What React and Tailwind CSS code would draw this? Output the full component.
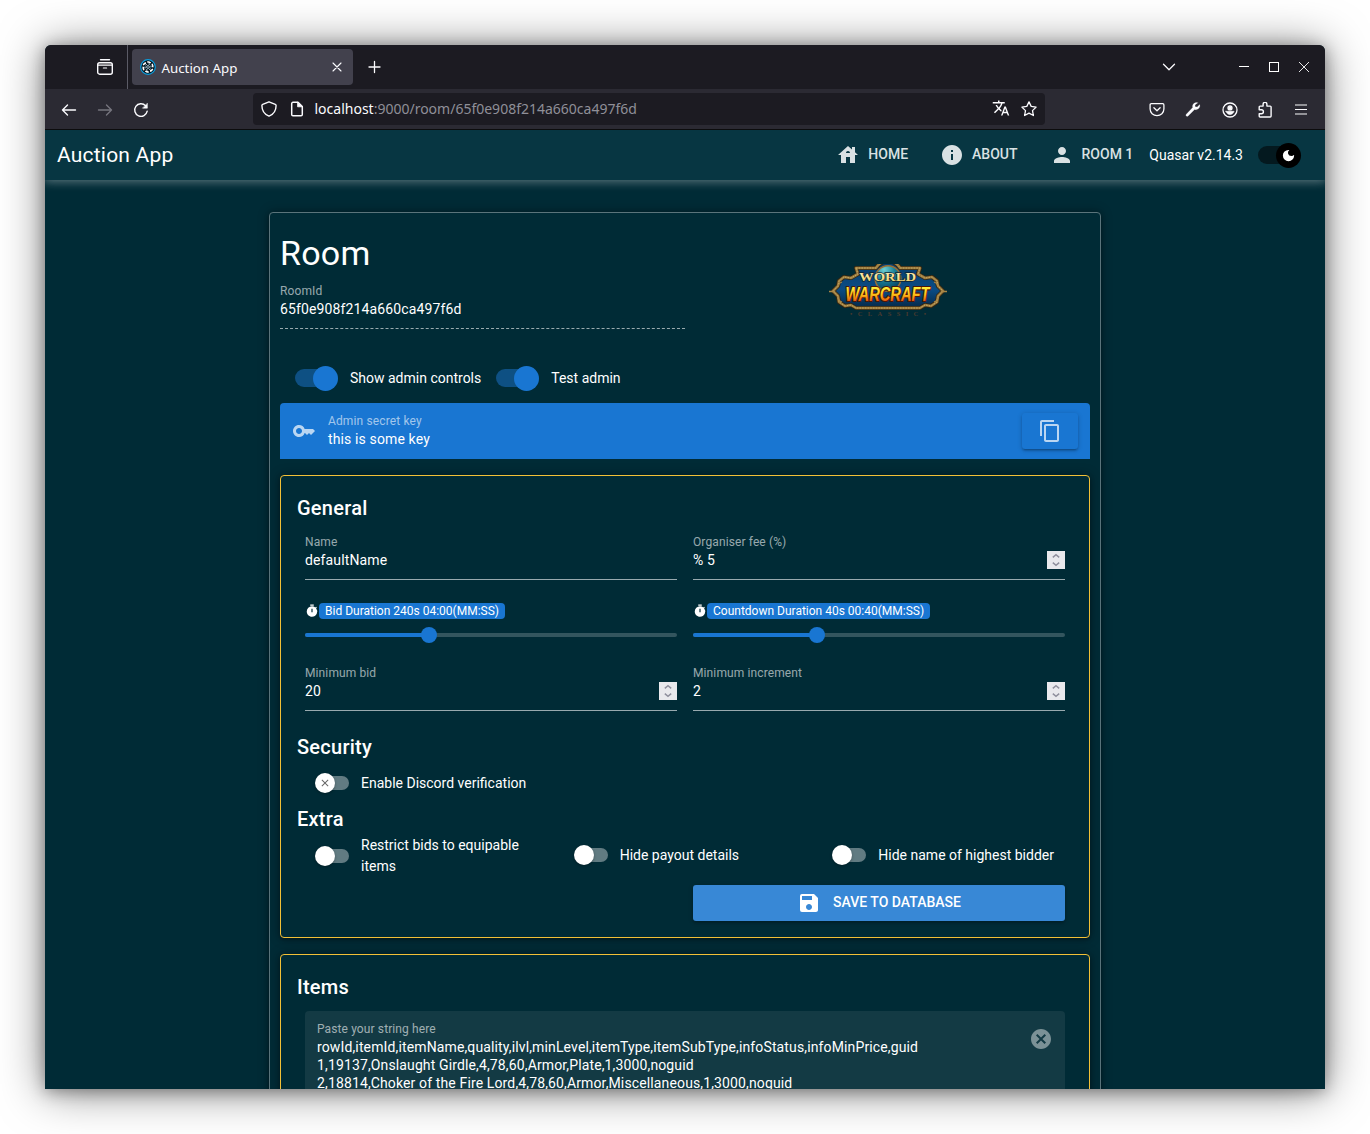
import React from "react";
import {
  MdKey,
  MdContentCopy,
  MdTimer,
  MdSave,
  MdCancel,
  MdInfo,
  MdPerson,
  MdHouse,
  MdDarkMode,
  MdClose,
  MdTranslate,
} from "react-icons/md";

const cardShadow =
  "shadow-[0_1px_5px_rgba(0,0,0,0.2),0_2px_2px_rgba(0,0,0,0.14),0_0_12px_rgba(0,0,0,0.3)]";

function Stroke({ size = 16, className = "", children, width = 1.4 }) {
  return (
    <svg
      width={size}
      height={size}
      viewBox={`0 0 ${size} ${size}`}
      fill="none"
      stroke="currentColor"
      strokeWidth={width}
      strokeLinecap="round"
      strokeLinejoin="round"
      className={`shrink-0 ${className}`}
    >
      {children}
    </svg>
  );
}

function Favicon() {
  return (
    <svg width="16" height="16" viewBox="0 0 16 16" className="shrink-0">
      <circle cx="8" cy="8" r="7.3" fill="#06141c" stroke="#0a9fe0" strokeWidth="1.2" />
      {[0, 60, 120, 180, 240, 300].map((a) => (
        <g key={a} transform={`rotate(${a} 8 8)`}>
          <path d="M7.200 2.300c1.500-.2 2.900.3 4 1.300L9.800 4.700C9 4 8.200 3.600 7.100 3.500z" fill="#fff" />
          <path d="M8.200 4.800l1.700.9" stroke="#b9e8fb" strokeWidth=".7" />
        </g>
      ))}
      <circle cx="8" cy="8" r="1.4" fill="#0c2a3a" stroke="#dff4fd" strokeWidth=".7" />
    </svg>
  );
}

function TabBar() {
  return (
    <div className="flex h-11 shrink-0 items-center bg-[#1c1b22] text-[#fbfbfe]">
      <div className="flex h-full w-[83px] items-center justify-end border-r border-[#5b5b66] pr-[14px]">
        <Stroke size={16} width={1.4}>
          <path d="M3.500.8h9" />
          <rect x=".7" y="3.700" width="14.600" height="11.500" rx="2" />
          <path d="M.9 6.200h14.200M6.400 9h3.200" strokeWidth="1.200" />
        </Stroke>
      </div>
      <div className="ml-1 flex h-9 w-[221px] items-center rounded bg-[#42414d] pr-[11px] pl-2">
        <Favicon />
        <span className="relative top-[1.500px] ml-[5.500px] flex-1 font-['Noto_Sans'] text-[13.3px] leading-none">
          Auction App
        </span>
        <Stroke size={10} width={1.1}>
          <path d="M1 1l8 8M9 1L1 9" />
        </Stroke>
      </div>
      <Stroke size={14} width={1.3} className="ml-[15px]">
        <path d="M6.500 1.500v11M1 7h11" />
      </Stroke>
      <div className="ml-auto flex items-center pr-4">
        <Stroke size={14} width={1.3} className="mr-[63px]">
          <path d="M1.500 4.300L7 9.700l5.500-5.400" />
        </Stroke>
        <svg width="10" height="12" className="mr-5">
          <path d="M0 5.500h10" stroke="#fff" />
        </svg>
        <svg width="10" height="10" className="mr-5">
          <rect x=".5" y=".5" width="9" height="9" fill="none" stroke="#fff" />
        </svg>
        <svg width="10" height="10">
          <path d="M0 0l10 10M10 0L0 10" stroke="#fff" strokeWidth=".9" />
        </svg>
      </div>
    </div>
  );
}

function NavBar() {
  return (
    <div className="relative z-10 flex h-[41px] shrink-0 items-center border-b border-[#0c0c0d] bg-[#2b2a33] pt-px text-[#fbfbfe]">
      <Stroke size={16} width={1.4} className="ml-4">
        <path d="M14.500 8H1.500M6.500 3L1.500 8l5 5" />
      </Stroke>
      <Stroke size={16} width={1.4} className="ml-5 text-[#76757e]">
        <path d="M1.500 8h13M9.500 3l5 5-5 5" />
      </Stroke>
      <Stroke size={16} width={1.4} className="ml-5">
        <path d="M14.200 9.200A6.300 6.300 0 1 1 12.600 3.700" />
        <path d="M14.400 1.500v4.700H9.700z" fill="currentColor" strokeWidth=".5" />
      </Stroke>
      <div className="relative -top-px ml-[104px] flex h-8 w-[792px] items-center rounded bg-[#1c1b22] pr-2 pl-2">
        <Stroke size={16} width={1.4}>
          <path d="M8 .8l6.300 2.500c.7.3.8.7.8 1.200 0 4-1.700 8.500-7.100 10.700C2.600 13 .9 8.500.9 4.500c0-.5.1-.9.8-1.200z" />
        </Stroke>
        <Stroke size={16} width={1.5} className="ml-3">
          <path d="M9 1.300H4a1.300 1.300 0 0 0-1.300 1.300v10.800A1.300 1.300 0 0 0 4 14.700h8a1.300 1.300 0 0 0 1.300-1.300V5.600z" />
          <path d="M8.600 1.500v4.300h4.600z" fill="currentColor" strokeWidth=".8" />
        </Stroke>
        <span className="ml-[9.500px] font-['Noto_Sans'] text-[14px] leading-none text-[#8f8f98]">
          <span className="text-[#fbfbfe]">localhost</span>:9000/room/65f0e908f214a660ca497f6d
        </span>
        <MdTranslate size={18} className="relative -top-px ml-auto" />
        <Stroke size={16} width={1.3} className="ml-[11px]">
          <path d="M8 .9l2.200 4.500 4.900.7-3.600 3.500.9 4.900L8 12.200l-4.400 2.300.9-4.900L.9 6.100l4.900-.7z" />
        </Stroke>
      </div>
      <div className="ml-auto flex items-center gap-5 pr-4">
        <Stroke size={16} width={1.3}>
          <path d="M2.300 1.700h11.400c.7 0 1.200.5 1.200 1.200v4.200a6.900 6.500 0 0 1-13.800 0V2.900c0-.7.5-1.200 1.200-1.200z" />
          <path d="M4.900 5.800L8 8.700l3.100-2.900" />
        </Stroke>
        <Stroke size={16} width={1}>
          <path
            d="M12.800.7a4 4 0 0 0-5.100 4.900L1.300 12.200a1.200 1.200 0 0 0 1.800 1.800l6.500-6.500a4 4 0 0 0 5.100-4.900l-2.500 2.400-2-.2-.2-1.900z"
            fill="currentColor"
            strokeWidth=".2"
          />
        </Stroke>
        <Stroke size={16} width={1.3} className="relative left-[0.500px]">
          <circle cx="8" cy="8" r="7" />
          <circle cx="8" cy="5.900" r="2" fill="currentColor" />
          <path d="M3.900 9.300h8.200c-.6 1.900-2.200 3.200-4.100 3.200s-3.500-1.300-4.100-3.200z" fill="currentColor" strokeWidth=".6" />
        </Stroke>
        <Stroke size={16} width={1.4}>
          <path d="M2.200 7.700V5c0-.5.300-.9.900-.9h3V2.300a1.900 1.900 0 0 1 3.800 0v1.800h3.300c.6 0 .9.400.9.900v9.100c0 .6-.3.900-.9.900H3.100c-.6 0-.9-.4-.9-.9v-2.400h2.200a2 2 0 0 0 0-4z" />
        </Stroke>
        <svg width="16" height="16" className="relative -top-px">
          <path d="M2 4h12M2 8.500h12M2 13h12" stroke="currentColor" strokeWidth="1.200" />
        </svg>
      </div>
    </div>
  );
}

function NavLink({ icon: Icon, children }) {
  return (
    <div className="flex items-center gap-2 px-4 text-[#d9e1e3]">
      <Icon size={24} />
      <span className="relative -top-px text-sm font-medium uppercase">{children}</span>
    </div>
  );
}

function BigToggle({ dark }) {
  return (
    <div className="flex h-[50px] w-[70px] shrink-0 items-center px-[15px]">
      <div
        className={`relative h-[18px] w-10 rounded-full ${dark ? "bg-[#04191f]" : "bg-[#0e5083]"}`}
      >
        <div
          className={`absolute -top-[3.500px] left-[17.500px] flex size-[25px] items-center justify-center rounded-full ${
            dark ? "bg-black" : "bg-[#1976d2]"
          }`}
        >
          {dark && <MdDarkMode size={15} className="text-white" />}
        </div>
      </div>
    </div>
  );
}

function SmallToggle({ label, cross }) {
  return (
    <div className="flex items-center">
      <div className="flex h-10 w-14 shrink-0 items-center px-3">
        <div className="relative h-[14px] w-8 rounded-full bg-[#617b82]">
          <div className="absolute -top-[3px] -left-[2px] flex size-5 items-center justify-center rounded-full bg-white shadow-[0_1px_3px_rgba(0,0,0,0.3)]">
            {cross && <MdClose size={12} className="text-black/60" />}
          </div>
        </div>
      </div>
      <span>{label}</span>
    </div>
  );
}

function Header() {
  return (
    <header className="relative flex h-[50px] shrink-0 items-center bg-[#073642] px-3 shadow-[0_0_10px_2px_rgba(255,255,255,0.2),0_0_10px_rgba(255,255,255,0.24)]">
      <div className="flex-1 text-[21px] tracking-[0.01em]">Auction App</div>
      <NavLink icon={MdHouse}>Home</NavLink>
      <NavLink icon={MdInfo}>About</NavLink>
      <NavLink icon={MdPerson}>Room 1</NavLink>
      <span>Quasar v2.14.3</span>
      <BigToggle dark />
    </header>
  );
}

function Spinner() {
  return (
    <svg width="18" height="18" className="shrink-0 bg-[#e9e9ed]">
      <path d="M5.800 6.400L9 3.600l3.200 2.800M5.800 11.600L9 14.400l3.200-2.800" fill="none" stroke="#8f8f9d" strokeWidth="1.400" />
    </svg>
  );
}

function Field({ label, value, number, dashed }) {
  return (
    <div
      className={`flex h-14 flex-col border-b pt-[10px] ${
        dashed ? "border-dashed border-white/60" : "border-[#99aaaf]"
      }`}
    >
      <div className="text-xs leading-4 tracking-[0.00937em] text-white/60">{label}</div>
      <div className="flex h-5 items-center justify-between tracking-[0.00937em]">
        <span>{value}</span>
        {number && <Spinner />}
      </div>
    </div>
  );
}

function Slider({ label }) {
  return (
    <div className="h-[75px] pt-[23px]">
      <div className="flex h-4 items-center">
        <MdTimer size={14} />
        <span className="flex h-4 items-center rounded bg-[#1976d2] px-[6px] text-xs leading-3">{label}</span>
      </div>
      <div className="mt-[14px] flex h-1 items-center rounded-sm bg-[#33555e]">
        <div className="h-1 w-1/3 rounded-sm bg-[#1976d2]" />
        <div className="-ml-2 size-4 rounded-full bg-[#1976d2]" />
      </div>
    </div>
  );
}

function Heading({ children }) {
  return <h6 className="text-xl leading-8 font-medium tracking-[0.0125em]">{children}</h6>;
}

const logoFrame =
  "M27 4h20a14 14 0 0 1 24 0h20l-2 6 7 4 7-1 5 4 1 5 5 5-5 5-1 6-6 4-6-1-5 3H27l-5-3-6 1-6-4-1-6-5-5 5-5 1-5 5-4 7 1 7-4z";

function WarcraftLogo() {
  return (
    <svg width="118" height="54" viewBox="0 0 118 54">
      <defs>
        <linearGradient id="gold" x1="0" y1="0" x2="0" y2="1">
          <stop offset=".2" stopColor="#fff23c" />
          <stop offset=".55" stopColor="#fdbf17" />
          <stop offset=".85" stopColor="#e4560c" />
        </linearGradient>
        <linearGradient id="pale" x1="0" y1="0" x2="0" y2="1">
          <stop offset="0" stopColor="#fffbd0" />
          <stop offset="1" stopColor="#f0cb5c" />
        </linearGradient>
        <radialGradient id="globe" cx=".35" cy=".15" r=".8">
          <stop offset="0" stopColor="#6fd0d4" />
          <stop offset=".5" stopColor="#1b8299" />
          <stop offset="1" stopColor="#094967" />
        </radialGradient>
        <linearGradient id="blue" x1="0" y1="0" x2="0" y2="1">
          <stop offset="0" stopColor="#073c69" />
          <stop offset=".6" stopColor="#0a4c85" />
          <stop offset="1" stopColor="#062948" />
        </linearGradient>
      </defs>
      <path d={logoFrame} fill="url(#blue)" stroke="#33240f" strokeWidth="4.200" strokeLinejoin="round" />
      <path d={logoFrame} fill="none" stroke="#94783f" strokeWidth="2.600" strokeLinejoin="round" />
      <path d={logoFrame} fill="none" stroke="#d0ad62" strokeWidth=".9" strokeDasharray="1.600 1.100" />
      <path
        d="M0 27.500h6M112 27.500h6M13 18c-3 1-4 3-4 5M105 18c3 1 4 3 4 5M13 38c-3-1-4-3-4-5M105 38c3-1 4-3 4-5"
        fill="none"
        stroke="#a98747"
        strokeWidth="1.300"
      />
      <circle cx="59" cy="14.500" r="12.800" fill="url(#globe)" stroke="#9a6f35" strokeWidth="1.500" />
      <text
        x="58.500"
        y="16.800"
        textAnchor="middle"
        textLength="57"
        lengthAdjust="spacingAndGlyphs"
        fontFamily="Liberation Serif, serif"
        fontSize="13.500"
        fontWeight="700"
        fill="url(#pale)"
        stroke="#132330"
        strokeWidth="1.400"
        paintOrder="stroke"
      >
        WORLD
      </text>
      <text
        x="58.500"
        y="36.500"
        textAnchor="middle"
        textLength="84"
        lengthAdjust="spacingAndGlyphs"
        fontFamily="Liberation Sans, sans-serif"
        fontSize="20"
        fontWeight="700"
        fontStyle="italic"
        fill="url(#gold)"
        stroke="#521505"
        strokeWidth="2.200"
        strokeLinejoin="round"
        paintOrder="stroke"
        className="[font-variant-caps:small-caps]"
      >
        WARCRAFT
      </text>
      <text
        x="59"
        y="51.500"
        textAnchor="middle"
        textLength="76"
        fontFamily="Liberation Serif, serif"
        fontSize="6.500"
        fontWeight="700"
        fill="#4a3a2e"
      >
        •CLASSIC•
      </text>
    </svg>
  );
}

function GeneralCard() {
  return (
    <section className={`mt-4 rounded border border-[#f2c037] bg-[#002b36] p-4 ${cardShadow}`}>
      <Heading>General</Heading>
      <div className="grid grid-cols-2 gap-x-4 px-2">
        <Field label="Name" value="defaultName" />
        <Field label="Organiser fee (%)" value="% 5" number />
        <Slider label="Bid Duration 240s 04:00(MM:SS)" />
        <Slider label="Countdown Duration 40s 00:40(MM:SS)" />
        <Field label="Minimum bid" value="20" number />
        <Field label="Minimum increment" value="2" number />
      </div>
      <div className="mt-5">
        <Heading>Security</Heading>
        <div className="px-2">
          <SmallToggle label="Enable Discord verification" cross />
        </div>
      </div>
      <Heading>Extra</Heading>
      <div className="grid grid-cols-3 items-start *:px-2">
        <SmallToggle label="Restrict bids to equipable items" />
        <SmallToggle label="Hide payout details" />
        <SmallToggle label="Hide name of highest bidder" />
      </div>
      <div className="mt-2 flex justify-end px-2">
        <button className="flex h-9 w-[372px] items-center justify-center gap-3 rounded-[3px] bg-[#3888d6] text-sm font-medium uppercase shadow-[0_1px_5px_rgba(0,0,0,0.2),0_2px_2px_rgba(0,0,0,0.14)]">
          <MdSave size={24} />
          <span className="relative -top-px">Save to database</span>
        </button>
      </div>
    </section>
  );
}

function ItemsCard() {
  return (
    <section className={`mt-4 rounded border border-[#f2c037] bg-[#002b36] p-4 ${cardShadow}`}>
      <Heading>Items</Heading>
      <div className="mx-2 mt-2 flex h-40 items-start rounded-t bg-[#133a44] px-3">
        <div className="flex-1 pt-[10px]">
          <div className="text-xs leading-4 tracking-[0.00937em] text-white/60">Paste your string here</div>
          <div className="mt-px leading-[18px] tracking-[0.00937em] whitespace-pre">
            {"rowId,itemId,itemName,quality,ilvl,minLevel,itemType,itemSubType,infoStatus,infoMinPrice,guid\n1,19137,Onslaught Girdle,4,78,60,Armor,Plate,1,3000,noguid\n2,18814,Choker of the Fire Lord,4,78,60,Armor,Miscellaneous,1,3000,noguid"}
          </div>
        </div>
        <MdCancel size={24} className="mt-4 text-[#7b9196]" />
      </div>
    </section>
  );
}

export default function App() {
  return (
    <div className="h-[1134px] w-[1370px] overflow-hidden bg-white p-[45px]">
      <div className="rounded-t-md shadow-[0_2px_45px_rgba(0,0,0,0.5),0_2px_16px_rgba(0,0,0,0.35)]">
        <div className="flex h-[1044px] flex-col overflow-hidden rounded-t-md bg-[#002b36] font-[Roboto,sans-serif] text-sm leading-[21px] text-white">
          <TabBar />
          <NavBar />
          <Header />
          <main className={`mx-auto mt-8 w-[832px] shrink-0 rounded border border-[#5a747b] p-[10px] ${cardShadow}`}>
            <div className="grid grid-cols-2 pt-[10px]">
              <div>
                <h4 className="text-[34px] leading-10 tracking-[0.00735em]">Room</h4>
                <Field label="RoomId" value="65f0e908f214a660ca497f6d" dashed />
              </div>
              <div className="flex justify-center pt-[31px]">
                <WarcraftLogo />
              </div>
            </div>
            <div className="mt-6 flex items-center">
              <BigToggle />
              <span>Show admin controls</span>
              <BigToggle />
              <span>Test admin</span>
            </div>
            <div className="flex h-14 items-center rounded-t bg-[#1976d2] px-3">
              <MdKey size={24} className="text-white/70" />
              <div className="ml-3 flex-1 tracking-[0.00937em]">
                <div className="text-xs leading-4 text-white/60">Admin secret key</div>
                <div className="leading-5">this is some key</div>
              </div>
              <button className="flex h-9 w-14 items-center justify-center rounded-[3px] text-white/70 shadow-[0_1px_5px_rgba(0,0,0,0.2),0_2px_2px_rgba(0,0,0,0.14),0_3px_1px_-2px_rgba(0,0,0,0.12)]">
                <MdContentCopy size={24} />
              </button>
            </div>
            <GeneralCard />
            <ItemsCard />
          </main>
        </div>
      </div>
    </div>
  );
}
